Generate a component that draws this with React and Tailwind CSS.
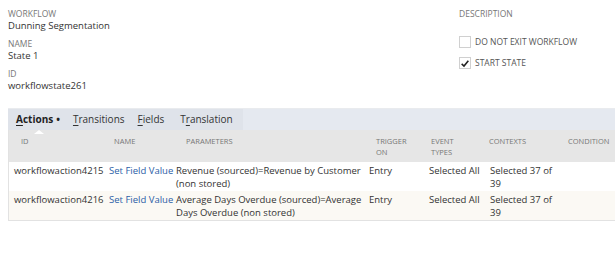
import React from 'react';

const font = { fontFamily: '"Open Sans", "Liberation Sans", sans-serif' };

const fields = [
  { label: 'Workflow', value: 'Dunning Segmentation' },
  { label: 'Name', value: 'State 1' },
  { label: 'ID', value: 'workflowstate261' },
];

const rows = [
  {
    id: 'workflowaction4215',
    name: 'Set Field Value',
    params: ['Revenue (sourced)=Revenue by Customer', '(non stored)'],
    trigger: 'Entry',
    events: 'Selected All',
    contexts: ['Selected 37 of', '39'],
  },
  {
    id: 'workflowaction4216',
    name: 'Set Field Value',
    params: ['Average Days Overdue (sourced)=Average', 'Days Overdue (non stored)'],
    trigger: 'Entry',
    events: 'Selected All',
    contexts: ['Selected 37 of', '39'],
  },
];

const cols = 'grid grid-cols-[95px_67px_193px_60px_61px_76px_1fr]';

const Lines = ({ lines }) => lines.map((l) => (
  <div key={l} className="whitespace-nowrap">{l}</div>
));

const Checkbox = ({ checked }) => (
  <div className="w-[12px] h-[12px] border border-[#d0d0d0] bg-white flex items-center justify-center">
    {checked && (
      <svg viewBox="0 0 12 12" className="w-[11px] h-[11px]">
        <path d="M2 6.5 L4.8 9 L10 2.8" fill="none" stroke="#222" strokeWidth="1.9" />
      </svg>
    )}
  </div>
);

const Tab = ({ first, rest, active }) => (
  <span className={`relative ${active ? 'font-bold text-[#222]' : 'text-[#333]'}`}>
    <span className="underline underline-offset-2">{first}</span>
    {rest}
    {active && <span className="ml-[3px]">•</span>}
    {active && (
      <span className="absolute left-[18px] bottom-[-7px] w-0 h-0 border-x-[5px] border-x-transparent border-b-[4px] border-b-white" />
    )}
  </span>
);

export default function App() {
  return (
    <div className="w-[615px] h-[256px] bg-white overflow-hidden text-[#333]" style={font}>
      <div className="flex pt-2 pl-2">
        <div className="w-[451px]">
          {fields.map((f) => (
            <div key={f.label} className="mb-[6px]">
              <div className="text-[8.5px] leading-[11px] uppercase text-[#777]">{f.label}</div>
              <div className="text-[9.5px] leading-[13px] text-[#333]">{f.value}</div>
            </div>
          ))}
        </div>
        <div>
          <div className="text-[8.5px] leading-[11px] uppercase text-[#777]">Description</div>
          <div className="mt-[13px] h-[20px] flex items-center gap-[4px]">
            <Checkbox />
            <span className="text-[8.5px] uppercase text-[#555]">Do not exit workflow</span>
          </div>
          <div className="mt-px h-[20px] flex items-center gap-[4px]">
            <Checkbox checked />
            <span className="text-[8.5px] uppercase text-[#555]">Start state</span>
          </div>
        </div>
      </div>

      <div className="ml-2 mt-[10px]">
        <div className="h-[22px] flex bg-[#e5e9f0] border-t border-[#e9ebee]">
          <div className="flex items-center gap-[13px] pl-2 pr-[10px] bg-[#dfe3ea] text-[10px]">
            <Tab first="A" rest="ctions" active />
            <Tab first="T" rest="ransitions" />
            <Tab first="F" rest="ields" />
            <span className="text-[#333] ml-[3px]">
              T<span className="underline underline-offset-2">r</span>anslation
            </span>
          </div>
        </div>

        <div className="border-l border-b border-[#e2e2e2]">
          <div className={`${cols} h-[32px] bg-[#e6e6e6] text-[7.5px] leading-[11px] uppercase text-[#777] pt-[6px]`}>
            <div className="pl-[12px]">ID</div>
            <div className="pl-[10px]">Name</div>
            <div className="pl-[15px]">Parameters</div>
            <div className="pl-[12px]">Trigger<br />On</div>
            <div className="pl-[7px]">Event<br />Types</div>
            <div className="pl-[4px]">Contexts</div>
            <div className="pl-[7px]">Condition</div>
          </div>
          {rows.map((r, i) => (
            <div
              key={r.id}
              className={`${cols} text-[9.5px] leading-[13px] pt-[2px] pb-px ${i % 2 ? 'bg-[#fbf9f4]' : 'bg-white'}`}
            >
              <div className="pl-[5px] whitespace-nowrap">{r.id}</div>
              <div className="pl-[5px] whitespace-nowrap text-[#2b5ea7]">{r.name}</div>
              <div className="pl-[5px]"><Lines lines={r.params} /></div>
              <div className="pl-[5px]">{r.trigger}</div>
              <div className="pl-[5px] whitespace-nowrap">{r.events}</div>
              <div className="pl-[5px]"><Lines lines={r.contexts} /></div>
              <div />
            </div>
          ))}
        </div>
      </div>
    </div>
  );
}
